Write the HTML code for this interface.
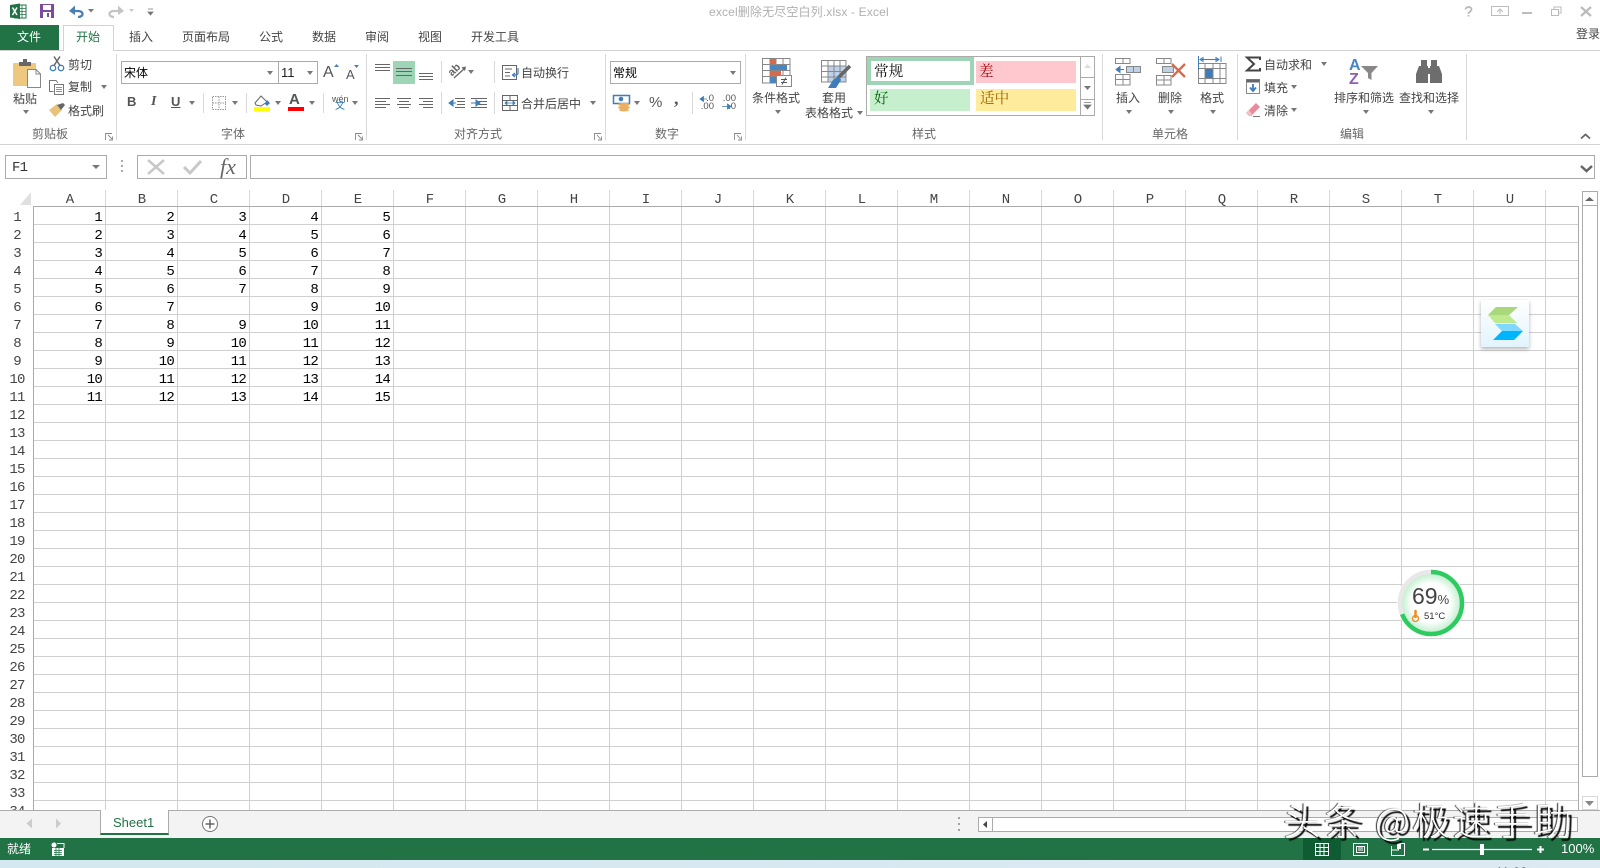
<!DOCTYPE html>
<html lang="zh-CN"><head><meta charset="utf-8"><title>Excel</title>
<style>
html,body{margin:0;padding:0;width:1600px;height:868px;overflow:hidden;background:#fff}
#p{position:relative;width:1600px;height:868px;overflow:hidden;font:12px/16px "Liberation Sans","Noto Sans CJK SC",sans-serif;color:#444}
.t{position:absolute;white-space:nowrap}
.g{color:#666}
.c{position:absolute;width:0;height:0;border-left:3.5px solid transparent;border-right:3.5px solid transparent;border-top:4px solid #777}
.b{position:absolute;box-sizing:border-box}
svg{position:absolute;left:0;top:0}
.h{position:absolute;left:34px;top:190px;display:flex}
.h div{width:71px;border-right:1px solid #d8d8d8;height:16px;text-align:center;font:14px/20px "Liberation Mono",monospace;letter-spacing:-.8px;color:#444}
.rh{position:absolute;left:0;top:209px;width:34px;height:601px;overflow:hidden;font:14px/18px "Liberation Mono",monospace;letter-spacing:-.8px;color:#444;text-align:center}
.rh div{height:18px}
.grid{position:absolute;left:33px;top:206px;width:1546px;height:604px;background-color:#fff;background-image:linear-gradient(to right,transparent 71px,#d0d0d0 71px),linear-gradient(to bottom,transparent 17px,#d0d0d0 17px);background-size:72px 18px;background-position:0 0;border-top:1px solid #ababab;border-left:1px solid #ababab;border-right:1px solid #ababab;box-sizing:border-box}
.d{position:absolute;left:34px;top:209px;font:14px/18px "Liberation Mono",monospace;letter-spacing:-.8px;color:#000}
.d div{display:flex;height:18px}
.d span{width:68px;padding-right:4px;text-align:right;display:block}
</style></head><body><div id="p">

<!-- grid -->
<div class="grid"></div>
<div class="rh"><div>1</div><div>2</div><div>3</div><div>4</div><div>5</div><div>6</div><div>7</div><div>8</div><div>9</div><div>10</div><div>11</div><div>12</div><div>13</div><div>14</div><div>15</div><div>16</div><div>17</div><div>18</div><div>19</div><div>20</div><div>21</div><div>22</div><div>23</div><div>24</div><div>25</div><div>26</div><div>27</div><div>28</div><div>29</div><div>30</div><div>31</div><div>32</div><div>33</div><div>34</div></div>
<div class="d">
<div><span>1</span><span>2</span><span>3</span><span>4</span><span>5</span></div>
<div><span>2</span><span>3</span><span>4</span><span>5</span><span>6</span></div>
<div><span>3</span><span>4</span><span>5</span><span>6</span><span>7</span></div>
<div><span>4</span><span>5</span><span>6</span><span>7</span><span>8</span></div>
<div><span>5</span><span>6</span><span>7</span><span>8</span><span>9</span></div>
<div><span>6</span><span>7</span><span></span><span>9</span><span>10</span></div>
<div><span>7</span><span>8</span><span>9</span><span>10</span><span>11</span></div>
<div><span>8</span><span>9</span><span>10</span><span>11</span><span>12</span></div>
<div><span>9</span><span>10</span><span>11</span><span>12</span><span>13</span></div>
<div><span>10</span><span>11</span><span>12</span><span>13</span><span>14</span></div>
<div><span>11</span><span>12</span><span>13</span><span>14</span><span>15</span></div>
</div>

<!-- chrome backgrounds -->
<div class="h"><div>A</div><div>B</div><div>C</div><div>D</div><div>E</div><div>F</div><div>G</div><div>H</div><div>I</div><div>J</div><div>K</div><div>L</div><div>M</div><div>N</div><div>O</div><div>P</div><div>Q</div><div>R</div><div>S</div><div>T</div><div>U</div></div>
<div class="b" style="left:1579px;top:190px;width:21px;height:620px;background:#fff"></div>
<div class="b" style="left:0;top:50px;width:1600px;height:1px;background:#d2d2d2"></div>
<div class="b" style="left:0;top:144px;width:1600px;height:1px;background:#d2d2d2"></div>
<div class="b" style="left:0;top:25px;width:59px;height:25px;background:#217346"></div>
<div class="b" style="left:63px;top:25px;width:51px;height:26px;background:#fff;border:1px solid #d2d2d2;border-bottom:0"></div>

<!-- tab bar & status -->
<div class="b" style="left:0;top:810px;width:1600px;height:28px;background:#f3f3f3;border-top:1px solid #ababab"></div>
<div class="b" style="left:100px;top:810px;width:69px;height:25px;background:#fff;border-left:1px solid #ababab;border-right:1px solid #ababab;border-bottom:2px solid #217346"></div>
<div class="b" style="left:0;top:838px;width:1600px;height:22px;background:#217346"></div>
<div class="b" style="left:1303px;top:838px;width:38px;height:22px;background:#0f5c33"></div>
<div class="b" style="left:0;top:860px;width:1600px;height:8px;background:linear-gradient(to right,#d3e8f0,#dde9f3)"></div>
<div class="t" style="left:1496px;top:865px;font-size:12px;line-height:14px;color:#222;letter-spacing:.5px">11:03</div>

<!-- scrollbars -->
<div class="b" style="left:1582px;top:191px;width:16px;height:15px;border:1px solid #ababab"></div>
<div class="b" style="left:1582px;top:206px;width:16px;height:571px;border:1px solid #ababab;border-top:0"></div>
<div class="b" style="left:1582px;top:796px;width:16px;height:14px;border:1px solid #d8d8d8"></div>
<div class="b" style="left:978px;top:817px;width:600px;height:15px;background:#fff;border:1px solid #ababab"></div>
<div class="b" style="left:978px;top:817px;width:15px;height:15px;border:1px solid #ababab"></div>

<!-- title and tabs -->
<div class="t" style="left:709px;top:4px;color:#b0b0b0;letter-spacing:.15px">excel删除无尽空白列.xlsx - Excel</div>
<div class="t" style="left:17px;top:29px;color:#fff">文件</div>
<div class="t" style="left:76px;top:29px;color:#217346">开始</div>
<div class="t" style="left:129px;top:29px">插入</div>
<div class="t" style="left:182px;top:29px">页面布局</div>
<div class="t" style="left:259px;top:29px">公式</div>
<div class="t" style="left:312px;top:29px">数据</div>
<div class="t" style="left:365px;top:29px">审阅</div>
<div class="t" style="left:418px;top:29px">视图</div>
<div class="t" style="left:471px;top:29px">开发工具</div>
<div class="t" style="left:1576px;top:26px">登录</div>

<!-- group labels -->
<div class="t g" style="left:32px;top:126px">剪贴板</div>
<div class="t g" style="left:221px;top:126px">字体</div>
<div class="t g" style="left:454px;top:126px">对齐方式</div>
<div class="t g" style="left:655px;top:126px">数字</div>
<div class="t g" style="left:912px;top:126px">样式</div>
<div class="t g" style="left:1152px;top:126px">单元格</div>
<div class="t g" style="left:1340px;top:126px">编辑</div>

<!-- clipboard -->
<div class="t" style="left:13px;top:91px">粘贴</div>
<div class="t" style="left:68px;top:57px">剪切</div>
<div class="t" style="left:68px;top:79px">复制</div>
<div class="t" style="left:68px;top:103px">格式刷</div>
<i class="c" style="left:23px;top:110px"></i><i class="c" style="left:101px;top:85px"></i>

<!-- font -->
<div class="b" style="left:121px;top:61px;width:158px;height:23px;border:1px solid #ababab"></div>
<div class="b" style="left:278px;top:61px;width:40px;height:23px;border:1px solid #ababab"></div>
<div class="t" style="left:124px;top:65px;color:#000">宋体</div>
<div class="t" style="left:281px;top:65px;color:#222;font-size:13px">11</div>
<i class="c" style="left:267px;top:71px"></i><i class="c" style="left:307px;top:71px"></i>
<div class="t" style="left:323px;top:65px;font-size:16px;color:#555">A</div>
<div class="t" style="left:346px;top:67px;font-size:13px;color:#555">A</div>
<div class="t" style="left:127px;top:94px;font-weight:bold;color:#555;font-size:13px">B</div>
<div class="t" style="left:151px;top:94px;font-style:italic;font-family:'Liberation Serif',serif;font-weight:bold;color:#555;font-size:14px">I</div>
<div class="t" style="left:171px;top:94px;font-weight:bold;color:#555;font-size:13px;text-decoration:underline">U</div>
<i class="c" style="left:189px;top:101px"></i><i class="c" style="left:232px;top:101px"></i><i class="c" style="left:275px;top:101px"></i><i class="c" style="left:309px;top:101px"></i><i class="c" style="left:352px;top:101px"></i>
<div class="t" style="left:289px;top:92px;font-size:15px;font-weight:bold;color:#555">A</div>
<div class="t" style="left:332px;top:91px;font-size:9px;line-height:16px;color:#555">wén</div>
<div class="t" style="left:335px;top:99px;font-size:10px;line-height:16px;color:#2a73b8">文</div>

<!-- alignment -->
<div class="b" style="left:393px;top:61px;width:22px;height:23px;background:#9fd5b7"></div>
<i class="c" style="left:468px;top:70px"></i><i class="c" style="left:590px;top:101px"></i>
<div class="t" style="left:521px;top:65px">自动换行</div>
<div class="t" style="left:521px;top:96px">合并后居中</div>
<div class="t" style="left:448px;top:63px;font-size:11px;font-weight:bold;line-height:14px;color:#666;transform:rotate(-45deg)">ab</div>

<!-- number -->
<div class="b" style="left:610px;top:61px;width:131px;height:23px;border:1px solid #ababab"></div>
<div class="t" style="left:613px;top:65px;color:#000">常规</div>
<i class="c" style="left:730px;top:71px"></i><i class="c" style="left:634px;top:101px"></i>
<div class="t" style="left:649px;top:95px;font-size:15px;color:#555">%</div>
<div class="t" style="left:674px;top:90px;font-size:18px;font-weight:bold;color:#555;font-family:'Liberation Serif',serif">,</div>
<div class="t" style="left:700px;top:95px;width:14px;text-align:right;font-size:9.5px;color:#555;line-height:8px">.0<br>.00</div>
<div class="t" style="left:722px;top:95px;width:14px;text-align:right;font-size:9.5px;color:#555;line-height:8px">.00<br>.0</div>

<!-- styles -->
<div class="t" style="left:752px;top:90px">条件格式</div>
<i class="c" style="left:775px;top:110px"></i>
<div class="t" style="left:822px;top:90px">套用</div>
<div class="t" style="left:805px;top:105px">表格格式</div>
<i class="c" style="left:857px;top:111px"></i>
<div class="b" style="left:866px;top:56px;width:229px;height:60px;border:1px solid #ababab"></div>
<div class="b" style="left:1080px;top:56px;width:15px;height:60px;border:1px solid #ababab"></div>
<div class="b" style="left:1080px;top:77px;width:15px;height:1px;background:#ababab"></div>
<div class="b" style="left:1080px;top:99px;width:15px;height:1px;background:#ababab"></div>
<div class="b" style="left:867px;top:57px;width:107px;height:28px;border:4px solid #9fd5b7;background:#fff"></div>
<div class="b" style="left:976px;top:61px;width:100px;height:22px;background:#ffc7ce"></div>
<div class="b" style="left:870px;top:89px;width:100px;height:22px;background:#c6efce"></div>
<div class="b" style="left:976px;top:89px;width:100px;height:22px;background:#ffeb9c"></div>
<div class="t" style="left:874px;top:63px;font:14.6px/18px 'Liberation Serif','Noto Serif CJK SC',serif;color:#000">常规</div>
<div class="t" style="left:979px;top:63px;font:14.6px/18px 'Liberation Serif','Noto Serif CJK SC',serif;color:#9c0006">差</div>
<div class="t" style="left:874px;top:90px;font:14.6px/18px 'Liberation Serif','Noto Serif CJK SC',serif;color:#006100">好</div>
<div class="t" style="left:980px;top:90px;font:14.6px/18px 'Liberation Serif','Noto Serif CJK SC',serif;color:#9c6500">适中</div>

<!-- cells -->
<div class="t" style="left:1116px;top:90px">插入</div>
<div class="t" style="left:1158px;top:90px">删除</div>
<div class="t" style="left:1200px;top:90px">格式</div>
<i class="c" style="left:1126px;top:110px"></i><i class="c" style="left:1168px;top:110px"></i><i class="c" style="left:1210px;top:110px"></i>

<!-- editing -->
<div class="t" style="left:1264px;top:57px">自动求和</div>
<div class="t" style="left:1264px;top:80px">填充</div>
<div class="t" style="left:1264px;top:103px">清除</div>
<i class="c" style="left:1321px;top:62px"></i><i class="c" style="left:1291px;top:85px"></i><i class="c" style="left:1291px;top:108px"></i>
<div class="t" style="left:1334px;top:90px">排序和筛选</div>
<div class="t" style="left:1399px;top:90px">查找和选择</div>
<i class="c" style="left:1363px;top:110px"></i><i class="c" style="left:1428px;top:110px"></i>
<div class="t" style="left:1349px;top:58px;font-size:16px;font-weight:bold;color:#4a86c0">A</div>
<div class="t" style="left:1349px;top:72px;font-size:16px;font-weight:bold;color:#8e5fb0">Z</div>

<!-- formula bar -->
<div class="b" style="left:5px;top:155px;width:102px;height:24px;border:1px solid #ababab"></div>
<div class="t" style="left:12px;top:160px;font:14px/16px 'Liberation Mono',monospace;letter-spacing:-.8px;color:#333">F1</div>
<i class="c" style="left:92px;top:165px;border-top-color:#777;border-left-width:4px;border-right-width:4px"></i>
<div class="b" style="left:137px;top:155px;width:110px;height:24px;border:1px solid #ababab"></div>
<div class="b" style="left:250px;top:155px;width:1345px;height:24px;border:1px solid #ababab"></div>
<div class="t" style="left:220px;top:156px;font:italic 22px/22px 'Liberation Serif',serif;color:#666">fx</div>

<!-- bottom text -->
<div class="t" style="left:113px;top:815px;font-size:13px;color:#217346">Sheet1</div>
<div class="t" style="left:7px;top:841px;color:#fff">就绪</div>
<div class="t" style="left:1561px;top:841px;color:#fff;font-size:13px">100%</div>

<!-- icons -->
<svg width="1600" height="868" viewBox="0 0 1600 868" fill="none">
<!-- QAT -->
<rect x="15" y="5" width="11" height="13" fill="#fff" stroke="#217346"/><path d="M19 8.500H26M19 11.500H26M19 14.500H26M22 5V18" stroke="#217346" stroke-width=".8"/>
<path d="M10 5L20 3.500V19L10 17.500Z" fill="#217346"/><path d="M12.500 7.500L17 15M17 7.500L12.500 15" stroke="#fff" stroke-width="1.500"/>
<rect x="40" y="4" width="14" height="14" fill="#7e4a9e"/><rect x="43" y="5" width="8" height="5" fill="#fff"/><rect x="43" y="12" width="8" height="6" fill="#fff"/><rect x="47" y="13" width="2" height="4" fill="#7e4a9e"/>
<path d="M72 11H78C84 11 84 17 78 17" stroke="#4a7fb5" stroke-width="2.300"/><path d="M69 11L75 5.500V15Z" fill="#4a7fb5"/><path d="M88 9H94L91 12.500Z" fill="#777"/>
<path d="M120 11H114C108 11 108 17 114 17" stroke="#c4c4c4" stroke-width="2.300"/><path d="M124 11L118 5.500V15Z" fill="#c4c4c4"/><path d="M129 9H134L131.500 12Z" fill="#c8c8c8"/>
<path d="M148 9H153M148 12H153L150.500 15Z" stroke="#777" fill="#777" stroke-width=".8"/>
<!-- window controls -->
<path d="M1465.500 9.500C1465.500 6.500 1471.500 6 1471.500 9.500C1471.500 11.500 1468.500 11.500 1468.500 14M1468.500 15V16.500" stroke="#bbb" stroke-width="1.800"/>
<rect x="1491.500" y="6.500" width="17" height="9" stroke="#bbb"/><path d="M1500 14V9M1497 12L1500 9L1503 12M1491 15.500H1509" stroke="#bbb"/>
<path d="M1522 13H1532" stroke="#bbb" stroke-width="2"/>
<rect x="1551.500" y="9.500" width="7" height="6" stroke="#bbb"/><path d="M1554 9V7H1561V13H1559" stroke="#bbb"/>
<path d="M1581 7L1591 16M1591 7L1581 16" stroke="#bbb" stroke-width="2.200"/>
<!-- group separators -->
<path d="M116.500 54V140M366.500 54V140M605.500 54V140M745.500 54V140M1102.500 54V140M1237.500 54V140M1466.500 54V140" stroke="#d8d8d8"/>
<path d="M203.500 93V113M246.500 93V113M323.500 93V113M441.500 61V83M441.500 92V114M494.500 61V83M494.500 92V114M692.500 92V114" stroke="#d8d8d8"/>
<!-- launchers -->
<g stroke="#888" stroke-width=".9"><path d="M105.500 140V133.500H112M109 140H112.500V136.500M108 135L112 139"/><path d="M355.500 140V133.500H362M359 140H362.500V136.500M358 135L362 139"/><path d="M594.500 140V133.500H601M598 140H601.500V136.500M600.500 139L597 135"/><path d="M734.500 140V133.500H741M738 140H741.500V136.500M740.500 139L737 135"/></g>
<!-- paste -->
<rect x="13" y="63" width="23" height="23" rx="1" fill="#edc87e"/><path d="M19 66V62H23V59H27V62H31V66Z" fill="#666"/>
<path d="M27.500 69.500H36L40.500 74V87.500H27.500Z" fill="#fff" stroke="#888"/><path d="M36 69.500V74H40.500" stroke="#888"/>
<!-- scissors -->
<circle cx="53" cy="68" r="2.700" stroke="#3f7cb8" stroke-width="1.300"/><circle cx="61" cy="68" r="2.700" stroke="#3f7cb8" stroke-width="1.300"/><path d="M54 65.500L60 56.500M60 65.500L54 56.500" stroke="#666" stroke-width="1.500"/>
<!-- copy -->
<path d="M53.500 91.500H49.500V80.500H56L58 83" stroke="#777"/><rect x="54.500" y="84.500" width="9" height="10" fill="#fff" stroke="#777"/><path d="M56 87.500H62M56 89.500H62M56 91.500H62" stroke="#3f7cb8" stroke-width=".8"/>
<!-- brush -->
<path d="M49 110L57 104L62 110L55 117Z" fill="#e9c27a"/><path d="M57 105L63 103L65 105L61 110Z" fill="#666"/>
<!-- font size arrows -->
<path d="M334 67H339L336.500 64Z" fill="#4a7fb5"/><path d="M354 65H359L356.500 68Z" fill="#4a7fb5"/>
<path d="M212.500 96.500H225.500V109.500H212.500ZM212.500 103H225.500M219 96.500V109.500" stroke="#999" stroke-dasharray="1.500 1"/>
<!-- fill colour -->
<path d="M255 103L261 96L267 102L261 106L256 105Z" fill="#fff" stroke="#666"/><path d="M267 100L270 103L267 106L265 104Z" fill="#3f7cb8"/><rect x="254" y="107" width="16" height="4" fill="#ffff00"/>
<rect x="288" y="107" width="16" height="4" fill="#ff0000"/>
<!-- alignment -->
<g stroke="#666"><path d="M375 64.500H390M375 67.500H390M375 70.500H390M396 68.500H412M396 71.500H412M396 75.500H412M419 73.500H433M419 76.500H433M419 79.500H433"/>
<path d="M375 98.500H390M375 101.500H386M375 104.500H390M375 107.500H386M397 98.500H411M399 101.500H409M397 104.500H411M399 107.500H409M419 98.500H433M423 101.500H433M419 104.500H433M423 107.500H433"/>
<path d="M455 98.500H465M457 101.500H465M457 104.500H465M455 107.500H465M471 98.500H481M471 107.500H481M478 98.500H487M478 101.500H487M478 104.500H487M478 107.500H487"/>
<rect x="502.500" y="65.500" width="14" height="14" fill="#fff"/><path d="M505 69H512M505 72.500H510M505 76H510"/>
<rect x="502.500" y="95.500" width="15" height="15"/><path d="M502.500 100.500H517.500M502.500 105.500H517.500M510 95.500V100.500M510 105.500V110.500"/></g>
<path d="M518 68V73C518 75 516 75 513 75M515 73L512.500 75L515 77" stroke="#3f7cb8" stroke-width="1.200"/>
<path d="M506 103H514M505 103L507 101V105ZM515 103L513 101V105Z" stroke="#3f7cb8" fill="#3f7cb8" stroke-width=".8"/>
<path d="M451 103H456M449 103L453 100V106ZM471 103H476M480 103L476 100V106Z" stroke="#3f7cb8" fill="#3f7cb8"/>
<!-- orientation -->
<path d="M454 78L465 68" stroke="#666" stroke-width="1.300"/><path d="M466 66.500L461.500 67.500L465 71Z" fill="#666"/>
<!-- accounting -->
<rect x="613.500" y="95.500" width="16" height="8" fill="#fff" stroke="#3f7cb8" stroke-width="1.500"/><circle cx="621" cy="99" r="2.300" fill="#3f7cb8"/><ellipse cx="624" cy="104.500" rx="6" ry="1.700" fill="#e9b062"/><ellipse cx="624" cy="107.500" rx="6" ry="1.700" fill="#e9b062"/><ellipse cx="624" cy="110" rx="5" ry="1.500" fill="#e9b062"/>
<!-- decimals -->
<path d="M702 99H707M700 99L703.500 96.500V101.500Z" stroke="#3f7cb8" fill="#3f7cb8" stroke-width=".8"/><path d="M722 106.500H728M731 106.500L727.500 104V109Z" stroke="#3f7cb8" fill="#3f7cb8" stroke-width=".8"/>
<!-- conditional format -->
<g stroke="#888"><path d="M762.500 58.500H790V83H762.500ZM762.500 64.500H790M762.500 70.500H790M762.500 76.500H790M770 58.500V83M776 58.500V83M783 58.500V83"/></g>
<rect x="770" y="59" width="6" height="5" fill="#d9694a"/><rect x="770" y="65" width="17" height="5" fill="#4a86c0"/><rect x="770" y="71" width="11" height="5" fill="#d9694a"/><rect x="770" y="77" width="6" height="6" fill="#4a86c0"/>
<rect x="776.500" y="75.500" width="15" height="11" fill="#fff" stroke="#888"/><path d="M781 79.500H787M781 82.500H787M786 77.500L782 84.500" stroke="#555"/>
<!-- table format -->
<rect x="828" y="66" width="18" height="16" fill="#bdd2e8"/><g stroke="#888"><path d="M821.500 60.500H846V82H821.500ZM821.500 66H846M821.500 71.500H846M821.500 77H846M828 60.500V82M834 60.500V82M840 60.500V82"/></g>
<path d="M850 66L838 78" stroke="#666" stroke-width="3.500"/><path d="M839 76L833 80L828 88H836L841 80Z" fill="#3f7cb8"/>
<!-- gallery scroll -->
<path d="M1084 68H1091L1087.500 64Z" fill="#ddd"/><path d="M1084 86H1091L1087.500 90Z" fill="#777"/><path d="M1084 102.500H1091M1084 105H1091L1087.500 109Z" stroke="#777" fill="#777" stroke-width=".8"/>
<!-- insert -->
<g stroke="#888"><path d="M1115.500 58.500H1130V63.500H1115.500ZM1123 58.500V63.500M1115.500 74.500H1130V85H1115.500ZM1115.500 79.500H1130M1123 74.500V85"/><rect x="1126.500" y="66.500" width="14" height="6" fill="#bdd2e8"/><path d="M1133.500 66.500V72.500"/></g>
<path d="M1118 69.500H1124M1116 69.500L1120 66.500V72.500Z" stroke="#3f7cb8" fill="#3f7cb8"/>
<!-- delete -->
<g stroke="#888"><path d="M1156.500 58.500H1171V63.500H1156.500ZM1164 58.500V63.500M1156.500 75.500H1171V85H1156.500ZM1156.500 80H1171M1164 75.500V85"/><rect x="1162.500" y="66.500" width="11" height="6" fill="#bdd2e8"/></g>
<path d="M1172 64L1185 77M1185 64L1172 77" stroke="#d9694a" stroke-width="2.300"/>
<!-- format -->
<rect x="1205" y="69" width="8" height="9" fill="#3f7cb8"/><g stroke="#888"><path d="M1198.500 63.500H1226V83.500H1198.500ZM1198.500 68.500H1226M1198.500 78.500H1226M1205 63.500V83.500M1213 63.500V83.500M1220 63.500V83.500"/></g>
<path d="M1200 59.500H1219M1200 59.500L1203 57.500V61.500ZM1219 59.500L1216 57.500V61.500ZM1221 56.500V62M1198.500 56V70" stroke="#3f7cb8"/>
<!-- sum etc -->
<path d="M1260 60V57.500H1247L1254 64L1247 70.500H1260V68" stroke="#444" stroke-width="2"/>
<rect x="1246.500" y="79.500" width="13" height="14" fill="#fff" stroke="#888"/><rect x="1246.500" y="79.500" width="13" height="3" fill="#666"/><path d="M1253 84V90M1250 87.500L1253 91L1256 87.500" stroke="#3f7cb8" stroke-width="1.800"/>
<path d="M1246 113L1256 103L1260 107L1251 116H1249Z" fill="#ea8a9a"/><path d="M1246 113L1249 110L1252 114L1250 116H1249Z" fill="#f3bfc8"/><path d="M1253 116.500H1260" stroke="#777"/>
<path d="M1361 66H1378L1371.500 73V80L1368 78V73Z" fill="#888"/>
<!-- binoculars -->
<path d="M1421 60H1427V66H1421ZM1431 60H1437V66H1431ZM1419 66H1428V83H1416V74ZM1430 66H1439L1442 74V83H1430Z" fill="#6d6d6d"/><path d="M1428 68H1430V74H1428Z" fill="#6d6d6d"/>
<!-- collapse -->
<path d="M1581 138.500L1585.500 134.500L1590 138.500" stroke="#666" stroke-width="1.800"/>
<!-- formula -->
<path d="M122 160V162M122 165V167M122 170V172" stroke="#aaa" stroke-width="2"/>
<path d="M148 160L164 174M164 160L148 174" stroke="#c8c8c8" stroke-width="2.500"/>
<path d="M184 167L190 173L201 161" stroke="#c8c8c8" stroke-width="3"/>
<path d="M1581 166L1586.500 171L1592 166" stroke="#666" stroke-width="2.500"/>
<!-- corner -->
<path d="M31 192V205H20Z" fill="#e0e0e0"/>
<!-- scroll carets -->
<path d="M1585 201H1594L1589.500 197Z" fill="#666"/><path d="M1585 801H1594L1589.500 806Z" fill="#888"/>
<path d="M983 824.500L987 821V828Z" fill="#444"/>
<path d="M959 817V819M959 823V825M959 829V831" stroke="#888" stroke-width="1.500"/>
<!-- sheet nav -->
<path d="M32 818.500V828.500L26.500 823.500Z" fill="#ccc"/><path d="M56 818.500V828.500L61 823.500Z" fill="#ccc"/>
<circle cx="210" cy="824" r="7.500" fill="#fff" stroke="#777"/><path d="M205.500 824H214.500M210 819.500V828.500" stroke="#666" stroke-width="1.500"/>
<!-- status icons -->
<g fill="#fff"><circle cx="54" cy="845" r="2.500"/><path d="M52 848H64V856H52Z"/></g><path d="M54 850.500H62M54 852.500H62M54 854.500H62M56 848V856M59 848V856" stroke="#217346" stroke-width=".8"/><path d="M57 843.500H64V848" stroke="#fff"/>
<g stroke="#fff"><path d="M1315.500 843.500H1328.500V855.500H1315.500ZM1315.500 847.500H1328.500M1315.500 851.500H1328.500M1320 843.500V855.500M1324 843.500V855.500"/>
<rect x="1353.500" y="843.500" width="14" height="12"/><rect x="1356.500" y="846.500" width="8" height="6"/><path d="M1358 848H1363M1358 850H1363"/>
<path d="M1391.500 846V855.500H1404.500V843.500H1398.500V850H1391.500"/></g><rect x="1397" y="844" width="4" height="5" fill="#fff"/>
<path d="M1432 849.500H1532" stroke="#fff" stroke-width="1.300"/><path d="M1423 849.500H1429M1537 849.500H1544M1540.500 846V853" stroke="#fff" stroke-width="2"/>
<rect x="1480" y="844" width="4" height="11" fill="#fff"/>
</svg>

<!-- float widget logo -->
<div class="b" style="left:1481px;top:300px;width:48px;height:47px;background:linear-gradient(#fff,#e2f4fe);box-shadow:0 2px 4px rgba(0,0,0,.3)"></div>
<svg width="1600" height="868" viewBox="0 0 1600 868">
<polygon points="1496,307 1518,307 1509,315 1488,315" fill="#a9d87a"/><polygon points="1488,315 1509,315 1517,323 1495,323" fill="#bfe98f"/>
<polygon points="1495,324 1515,324 1523,331 1502,331" fill="#7fd9ff"/><polygon points="1502,331 1523,331 1514,340 1493,340" fill="#00b5ff"/>
<defs><radialGradient id="rg"><stop offset="62%" stop-color="#fff"/><stop offset="100%" stop-color="#b9edc8"/></radialGradient></defs>
<circle cx="1431" cy="603" r="34" fill="#fff" opacity=".85"/>
<circle cx="1431" cy="603" r="31" fill="url(#rg)" stroke="#e8e8e8" stroke-width="4.500"/>
<circle cx="1431" cy="603" r="31" fill="none" stroke="#2ecc60" stroke-width="4.500" stroke-dasharray="134.400 200" transform="rotate(-90 1431 603)"/>
<path d="M1415.500 611V617" stroke="#f08a1d" stroke-width="2.500" stroke-linecap="round"/><circle cx="1415.500" cy="618.500" r="3" fill="none" stroke="#f08a1d" stroke-width="1.300"/>
</svg>
<div class="t" style="left:1412px;top:582px;font-size:23px;line-height:28px;color:#444">69<span style="font-size:13px">%</span></div>
<div class="t" style="left:1424px;top:610px;font-size:9.5px;line-height:14px;color:#333">51°C</div>

<!-- watermark -->
<div class="t" style="left:1283px;top:794px;font:300 38px/50px 'Noto Sans CJK SC','Liberation Sans',sans-serif;color:#fff;letter-spacing:2.500px;text-shadow:3px 3px 1px #000,-1px 0 1px #222">头条 @极速手助</div>

</div></body></html>
